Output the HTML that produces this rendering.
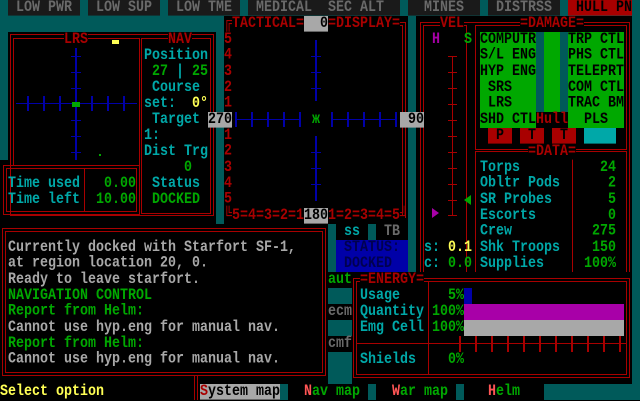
<!DOCTYPE html>
<html><head><meta charset="utf-8"><style>
*{margin:0;padding:0;box-sizing:border-box}
body{width:640px;height:400px;background:#000;position:relative;overflow:hidden;font-family:"Liberation Mono",monospace;font-size:13.33px;font-weight:bold;line-height:13.333px}
.d{position:absolute;background:#005a5a}
.b{position:absolute;background:#000}
.t{position:absolute;white-space:pre;height:13.333px;line-height:13.333px;transform:scaleY(1.2);transform-origin:0 0}
.ml{height:auto}
.r{position:absolute;border:1px solid #a80000}
.l{position:absolute;background:#a80000}
.u{position:absolute;background:#0000a8}
.c{color:#00a8a8}.g{color:#00a800}.rd{color:#a80000}.gy{color:#a8a8a8}.y{color:#ffff55}.m{color:#a800a8}.k{color:#000}.p{color:#ff5555}
.z{z-index:5}
</style></head><body>
<div class="d" style="left:0;top:0;width:640px;height:384px"></div>
<div class="t" style="left:8px;top:0;width:72px;background:#1a1a1a;color:#6a6a6a"> LOW PWR</div>
<div class="t" style="left:88px;top:0;width:72px;background:#1a1a1a;color:#6a6a6a"> LOW SUP</div>
<div class="t" style="left:168px;top:0;width:72px;background:#1a1a1a;color:#6a6a6a"> LOW TME</div>
<div class="t" style="left:248px;top:0;width:72px;background:#1a1a1a;color:#6a6a6a"> MEDICAL</div>
<div class="t" style="left:320px;top:0;width:80px;background:#1a1a1a;color:#6a6a6a"> SEC ALT</div>
<div class="t" style="left:408px;top:0;width:72px;background:#1a1a1a;color:#6a6a6a">  MINES</div>
<div class="t" style="left:488px;top:0;width:72px;background:#1a1a1a;color:#6a6a6a"> DISTRSS</div>
<div class="t" style="left:568px;top:0;width:64px;background:#a80000;color:#000"> HULL PN</div>

<div class="b" style="left:8px;top:32px;width:208px;height:192px"></div>
<div class="b" style="left:0;top:160px;width:16px;height:64px"></div>
<div class="r" style="left:10px;top:34px;width:204px;height:182px"></div>
<div class="r" style="left:13px;top:38px;width:127px;height:128px"></div>
<div class="r" style="left:141px;top:38px;width:70px;height:176px"></div>
<div class="r" style="left:3px;top:165px;width:137px;height:50px"></div>
<div class="r" style="left:6px;top:168px;width:131px;height:44px"></div>
<div class="l" style="left:84px;top:168px;width:1px;height:44px"></div>
<div class="t rd" style="left:64px;top:32px;background:#000">LRS</div>
<div class="t rd" style="left:168px;top:32px;background:#000">NAV</div>
<div style="position:absolute;left:112px;top:40px;width:7px;height:4px;background:#ffff55"></div>
<div class="u" style="left:75px;top:48px;width:2px;height:112px"></div>
<div class="u" style="left:16px;top:103px;width:121px;height:1px"></div>
<div class="u" style="left:27px;top:96px;width:2px;height:15px"></div>
<div class="u" style="left:43px;top:96px;width:2px;height:15px"></div>
<div class="u" style="left:59px;top:96px;width:2px;height:15px"></div>
<div class="u" style="left:91px;top:96px;width:2px;height:15px"></div>
<div class="u" style="left:107px;top:96px;width:2px;height:15px"></div>
<div class="u" style="left:123px;top:96px;width:2px;height:15px"></div>
<div class="u" style="left:71px;top:56px;width:10px;height:1px"></div>
<div class="u" style="left:71px;top:72px;width:10px;height:1px"></div>
<div class="u" style="left:71px;top:88px;width:10px;height:1px"></div>
<div class="u" style="left:71px;top:120px;width:10px;height:1px"></div>
<div class="u" style="left:71px;top:136px;width:10px;height:1px"></div>
<div class="u" style="left:71px;top:152px;width:10px;height:1px"></div>
<div style="position:absolute;left:72px;top:102px;width:8px;height:5px;background:#00a800"></div>
<div style="position:absolute;left:99px;top:154px;width:2px;height:2px;background:#00a800"></div>
<div class="t c" style="left:144px;top:48px">Position</div>
<div class="t g" style="left:152px;top:64px">27 <span class="c">|</span> 25</div>
<div class="t c" style="left:152px;top:80px">Course</div>
<div class="t c" style="left:144px;top:96px">set:  <span class="y">0°</span></div>
<div class="t c" style="left:152px;top:112px">Target</div>
<div class="t c" style="left:144px;top:128px">1:</div>
<div class="t c" style="left:144px;top:144px">Dist Trg</div>
<div class="t g" style="left:184px;top:160px">0</div>
<div class="t c" style="left:152px;top:176px">Status</div>
<div class="t g" style="left:152px;top:192px">DOCKED</div>
<div class="t c" style="left:8px;top:176px">Time used</div>
<div class="t g" style="left:104px;top:176px">0.00</div>
<div class="t c" style="left:8px;top:192px">Time left</div>
<div class="t g" style="left:96px;top:192px">10.00</div>

<div class="b" style="left:224px;top:16px;width:184px;height:208px"></div>
<div class="r" style="left:226px;top:22px;width:180px;height:196px;border-left:none;border-bottom:none"></div>
<div class="r" style="left:229px;top:25px;width:174px;height:190px;border-left:none;border-bottom:none"></div>
<div class="t rd" style="left:224px;top:16px;background:#000">╔TACTICAL=</div>
<div class="t k" style="left:304px;top:16px;width:24px;background:#a8a8a8;text-align:right">0</div>
<div class="t rd" style="left:328px;top:16px;background:#000">=DISPLAY=</div>
<div class="t rd ml" style="left:224px;top:32px">5<br>4<br>3<br>2<br>1</div>
<div class="t rd ml" style="left:224px;top:128px">1<br>2<br>3<br>4<br>5</div>
<div class="t k z" style="left:208px;top:112px;width:24px;background:#a8a8a8">270</div>
<div class="t rd" style="left:224px;top:208px">╚5=4=3=2=1</div>
<div class="t k" style="left:304px;top:208px;width:24px;background:#a8a8a8">180</div>
<div class="t rd" style="left:328px;top:208px">1=2=3=4=5╝</div>
<div class="u" style="left:315px;top:40px;width:2px;height:61px"></div>
<div class="u" style="left:315px;top:136px;width:2px;height:65px"></div>
<div class="u" style="left:236px;top:119px;width:64px;height:1px"></div>
<div class="u" style="left:332px;top:119px;width:64px;height:1px"></div>
<div class="u" style="left:235px;top:112px;width:2px;height:15px"></div>
<div class="u" style="left:251px;top:112px;width:2px;height:15px"></div>
<div class="u" style="left:267px;top:112px;width:2px;height:15px"></div>
<div class="u" style="left:283px;top:112px;width:2px;height:15px"></div>
<div class="u" style="left:299px;top:112px;width:2px;height:15px"></div>
<div class="u" style="left:331px;top:112px;width:2px;height:15px"></div>
<div class="u" style="left:347px;top:112px;width:2px;height:15px"></div>
<div class="u" style="left:363px;top:112px;width:2px;height:15px"></div>
<div class="u" style="left:379px;top:112px;width:2px;height:15px"></div>
<div class="u" style="left:395px;top:112px;width:2px;height:15px"></div>
<div class="u" style="left:311px;top:56px;width:10px;height:1px"></div>
<div class="u" style="left:311px;top:72px;width:10px;height:1px"></div>
<div class="u" style="left:311px;top:88px;width:10px;height:1px"></div>
<div class="u" style="left:311px;top:152px;width:10px;height:1px"></div>
<div class="u" style="left:311px;top:168px;width:10px;height:1px"></div>
<div class="u" style="left:311px;top:184px;width:10px;height:1px"></div>
<div class="t g" style="left:312px;top:112px">ж</div>

<div class="b" style="left:416px;top:16px;width:56px;height:264px"></div>
<div class="r" style="left:420px;top:22px;width:52px;height:256px;border-right:none"></div>
<div class="r" style="left:423px;top:25px;width:44px;height:250px"></div>
<div class="t rd" style="left:440px;top:16px;background:#000">VEL</div>
<div class="t m" style="left:432px;top:32px">H</div>
<div class="t g" style="left:464px;top:32px">S</div>
<div class="l" style="left:452px;top:56px;width:1px;height:160px"></div>
<div class="l" style="left:448px;top:56px;width:9px;height:1px;box-shadow:0 16px #a80000,0 32px #a80000,0 48px #a80000,0 64px #a80000,0 80px #a80000,0 96px #a80000,0 112px #a80000,0 128px #a80000,0 144px #a80000,0 159px #a80000"></div>
<div style="position:absolute;left:464px;top:195px;width:0;height:0;border-top:5px solid transparent;border-bottom:5px solid transparent;border-right:7px solid #00a800"></div>
<div style="position:absolute;left:432px;top:208px;width:0;height:0;border-top:5px solid transparent;border-bottom:5px solid transparent;border-left:7px solid #a800a8"></div>
<div class="t c" style="left:424px;top:240px">s: <span class="y">0.1</span></div>
<div class="t c" style="left:424px;top:256px">c: <span class="g">0.0</span></div>
<div class="t k z" style="left:400px;top:112px;width:24px;background:#a8a8a8;text-align:right">90</div>

<div class="b" style="left:472px;top:16px;width:160px;height:264px"></div>
<div class="r" style="left:472px;top:22px;width:158px;height:256px;border-left:none"></div>
<div class="r" style="left:475px;top:25px;width:152px;height:125px"></div>
<div class="r" style="left:475px;top:151px;width:152px;height:124px"></div>
<div class="l" style="left:572px;top:152px;width:1px;height:120px"></div>
<div class="t rd" style="left:520px;top:16px;background:#000">=DAMAGE=</div>
<div style="position:absolute;left:480px;top:32px;width:144px;height:96px;background:#00a800"></div>
<div class="d" style="left:536px;top:32px;width:8px;height:80px"></div>
<div class="d" style="left:560px;top:32px;width:8px;height:80px"></div>
<div class="b" style="left:536px;top:112px;width:32px;height:16px"></div>
<div class="t k ml" style="left:480px;top:32px">COMPUTR<br>S/L ENG<br>HYP ENG<br> SRS<br> LRS<br>SHD CTL</div>
<div class="t k ml" style="left:568px;top:32px">TRP CTL<br>PHS CTL<br>TELEPRT<br>COM CTL<br>TRAC BM<br>  PLS</div>
<div class="t rd" style="left:536px;top:112px">Hull</div>
<div class="t k" style="left:488px;top:128px;width:24px;background:#a80000;text-align:center">P</div>
<div class="t k" style="left:520px;top:128px;width:24px;background:#a80000;text-align:center">T</div>
<div class="t k" style="left:552px;top:128px;width:24px;background:#a80000;text-align:center">T</div>
<div class="t" style="left:584px;top:128px;width:32px;background:#00a8a8"></div>
<div class="t rd" style="left:528px;top:144px;background:#000">=DATA=</div>
<div class="t c ml" style="left:480px;top:160px">Torps<br>Obltr Pods<br>SR Probes<br>Escorts<br>Crew<br>Shk Troops<br>Supplies</div>
<div class="t g ml" style="left:576px;top:160px;width:40px;text-align:right">24<br>2<br>5<br>0<br>275<br>150<br>100%</div>

<div class="b" style="left:336px;top:224px;width:72px;height:48px"></div>
<div class="d" style="left:368px;top:224px;width:8px;height:16px"></div>
<div class="t c" style="left:344px;top:224px">ss</div>
<div class="t" style="left:384px;top:224px;color:#6a6a6a">TB</div>
<div class="u" style="left:336px;top:240px;width:72px;height:32px"></div>
<div class="t" style="left:344px;top:240px;color:#000050">STATUS:</div>
<div class="t" style="left:344px;top:256px;color:#000050">DOCKED</div>
<div class="b" style="left:328px;top:272px;width:24px;height:16px"></div>
<div class="t g" style="left:328px;top:272px">aut</div>
<div class="b" style="left:328px;top:304px;width:24px;height:16px"></div>
<div class="t" style="left:328px;top:304px;color:#6a6a6a">ecm</div>
<div class="b" style="left:328px;top:336px;width:24px;height:16px"></div>
<div class="t" style="left:328px;top:336px;color:#6a6a6a">cmf</div>

<div class="b" style="left:352px;top:272px;width:280px;height:112px"></div>
<div class="r" style="left:353px;top:278px;width:277px;height:100px"></div>
<div class="r" style="left:356px;top:281px;width:271px;height:94px"></div>
<div class="l" style="left:428px;top:282px;width:1px;height:92px"></div>
<div class="l" style="left:357px;top:343px;width:269px;height:1px"></div>
<div class="t rd" style="left:360px;top:272px;background:#000">=ENERGY=</div>
<div class="t c" style="left:360px;top:288px">Usage</div>
<div class="t c" style="left:360px;top:304px">Quantity</div>
<div class="t c" style="left:360px;top:320px">Emg Cell</div>
<div class="t c" style="left:360px;top:352px">Shields</div>
<div class="t g" style="left:432px;top:288px;width:32px;text-align:right">5%</div>
<div class="t g" style="left:432px;top:304px;width:32px;text-align:right">100%</div>
<div class="t g" style="left:432px;top:320px;width:32px;text-align:right">100%</div>
<div class="t g" style="left:432px;top:352px;width:32px;text-align:right">0%</div>
<div class="u" style="left:464px;top:288px;width:8px;height:16px"></div>
<div style="position:absolute;left:464px;top:304px;width:160px;height:16px;background:#a800a8"></div>
<div style="position:absolute;left:464px;top:320px;width:160px;height:16px;background:#a8a8a8"></div>
<div class="l" style="left:459px;top:336px;width:2px;height:16px;box-shadow:16px 0 #a80000,32px 0 #a80000,48px 0 #a80000,64px 0 #a80000,80px 0 #a80000,96px 0 #a80000,112px 0 #a80000,128px 0 #a80000,144px 0 #a80000,160px 0 #a80000"></div>

<div class="b" style="left:0;top:224px;width:328px;height:160px"></div>
<div class="r" style="left:2px;top:228px;width:324px;height:148px"></div>
<div class="r" style="left:5px;top:231px;width:318px;height:142px"></div>
<div class="t gy ml" style="left:8px;top:240px">Currently docked with Starfort SF-1,
at region location 20, 0.
Ready to leave starfort.
<span class="g">NAVIGATION CONTROL</span>
<span class="g">Report from Helm:</span>
Cannot use hyp.eng for manual nav.
<span class="g">Report from Helm:</span>
Cannot use hyp.eng for manual nav.</div>

<div class="b" style="left:0;top:384px;width:640px;height:16px"></div>
<div class="t y" style="left:0;top:384px">Select option</div>
<div class="l" style="left:194px;top:376px;width:1px;height:24px"></div>
<div class="l" style="left:197px;top:376px;width:1px;height:24px"></div>
<div class="t k" style="left:200px;top:384px;width:80px;background:#a8a8a8"><span class="rd">S</span>ystem map</div>
<div class="d" style="left:280px;top:384px;width:8px;height:16px"></div>
<div class="t g" style="left:304px;top:384px"><span class="p">N</span>av map</div>
<div class="d" style="left:368px;top:384px;width:8px;height:16px"></div>
<div class="t g" style="left:392px;top:384px"><span class="p">W</span>ar map</div>
<div class="d" style="left:456px;top:384px;width:8px;height:16px"></div>
<div class="t g" style="left:488px;top:384px"><span class="p">H</span>elm</div>
<div class="d" style="left:544px;top:384px;width:96px;height:16px"></div>
</body></html>
